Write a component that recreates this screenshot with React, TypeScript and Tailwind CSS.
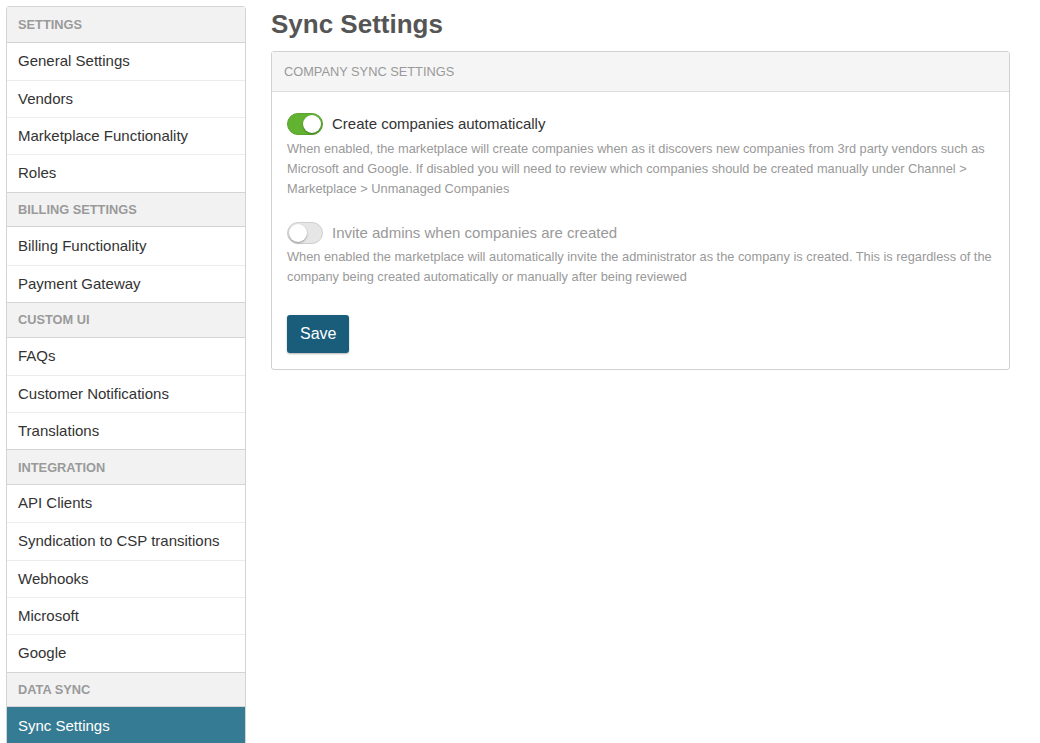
const sections = [
  { title: "Settings", items: ["General Settings", "Vendors", "Marketplace Functionality", "Roles"] },
  { title: "Billing Settings", items: ["Billing Functionality", "Payment Gateway"] },
  { title: "Custom UI", items: ["FAQs", "Customer Notifications", "Translations"] },
  { title: "Integration", items: ["API Clients", "Syndication to CSP transitions", "Webhooks", "Microsoft", "Google"] },
  { title: "Data Sync", items: ["Sync Settings"] },
];

function Toggle({ on }: { on: boolean }) {
  return (
    <span
      className={`relative inline-block w-[36px] h-[22px] rounded-full shrink-0 ${
        on ? "bg-[#62b332] border border-[#58a52b]" : "bg-[#e6e6e6] border border-[#cfcfcf]"
      }`}
    >
      <span
        className={`absolute top-[1px] w-[18px] h-[18px] rounded-full bg-white shadow-[0_1px_2px_rgba(0,0,0,0.35)] ${
          on ? "right-[1px]" : "left-[1px]"
        }`}
      />
    </span>
  );
}

export default function App() {
  return (
    <div className="flex w-[1040px] h-[743px] overflow-hidden bg-white [font-family:'Liberation_Sans',Arial,sans-serif]">
      <aside className="ml-[6px] mt-[6px] w-[240px] shrink-0 border border-[#d4d4d4] rounded-t-[3px] self-start">
        {sections.map((section, i) => (
          <div key={section.title}>
            <div
              className={`h-[35.6px] flex items-center px-[11px] bg-[#f2f2f2] text-[12.8px] font-bold uppercase text-[#9a9a9a] border-b border-[#d4d4d4] ${
                i > 0 ? "border-t" : ""
              }`}
            >
              {section.title}
            </div>
            {section.items.map((item, j) => {
              const active = item === "Sync Settings";
              return (
                <div
                  key={item}
                  className={`h-[37.3px] flex items-center px-[11px] text-[15px] ${
                    j > 0 ? "border-t border-[#ececec]" : ""
                  } ${active ? "bg-[#367b94] text-white" : "text-[#333]"}`}
                >
                  {item}
                </div>
              );
            })}
          </div>
        ))}
      </aside>

      <main className="ml-[25px] flex-1 pr-[30px]">
        <h1 className="mt-[9px] text-[26px] leading-[30px] font-bold text-[#555]">Sync Settings</h1>
        <div className="mt-[12px] w-[739px] border border-[#d0d0d0] rounded-[3px]">
          <div className="h-[40px] flex items-center px-[12px] bg-[#f5f5f5] border-b border-[#dcdcdc] text-[12.8px] uppercase text-[#999]">
            Company Sync Settings
          </div>
          <div className="px-[15px] pt-[21px] pb-[16px]">
            <div className="flex items-center gap-[9px]">
              <Toggle on />
              <span className="text-[15px] text-[#333]">Create companies automatically</span>
            </div>
            <p className="mt-[3px] text-[12.8px] leading-[20px] text-[#999]">
              When enabled, the marketplace will create companies when as it discovers new companies from 3rd party vendors such as
              Microsoft and Google. If disabled you will need to review which companies should be created manually under Channel &gt;
              Marketplace &gt; Unmanaged Companies
            </p>

            <div className="mt-[23px] flex items-center gap-[9px]">
              <Toggle on={false} />
              <span className="text-[15px] text-[#999]">Invite admins when companies are created</span>
            </div>
            <p className="mt-[3px] text-[12.8px] leading-[20px] text-[#999]">
              When enabled the marketplace will automatically invite the administrator as the company is created. This is regardless of the
              company being created automatically or manually after being reviewed
            </p>

            <button className="mt-[28px] h-[38px] px-[13px] rounded-[3px] bg-[#1a5d7a] text-white text-[16px] shadow-[0_1px_2px_rgba(0,0,0,0.3)]">
              Save
            </button>
          </div>
        </div>
      </main>
    </div>
  );
}
